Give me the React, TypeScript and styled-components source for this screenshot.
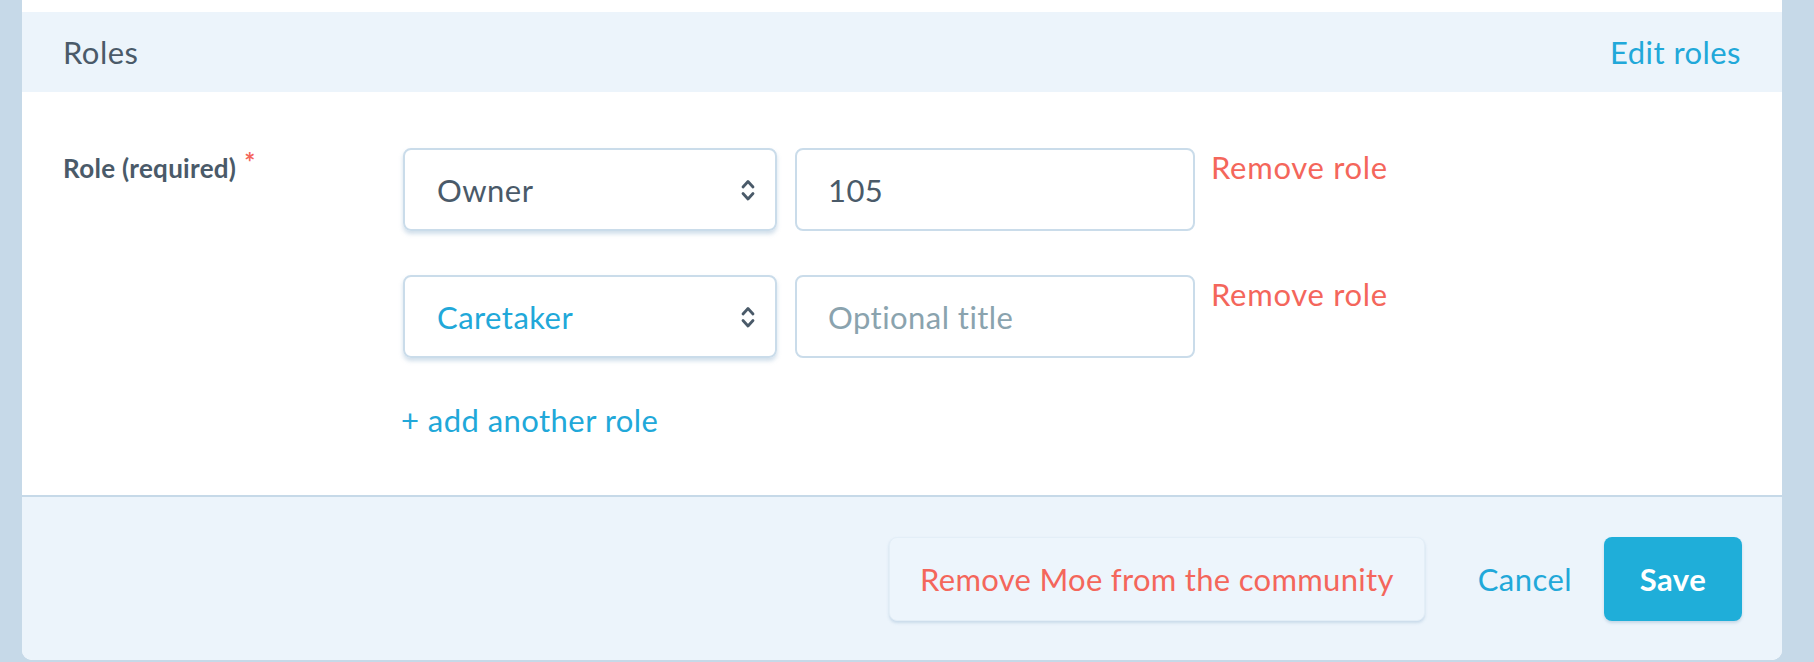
import React from 'react';
import styled, { createGlobalStyle } from 'styled-components';

const GlobalStyle = createGlobalStyle`
  body {
    margin: 0;
    background: #c6d9e8;
    font-family: 'Lato', 'Liberation Sans', sans-serif;
    letter-spacing: 0.45px;
  }
`;

const roles = [
  { role: 'Owner', title: '105' },
  { role: 'Caretaker', title: '' },
];

const Chevrons = () => (
  <svg width="14" height="22" viewBox="0 0 14 22" fill="none">
    <path d="M2 8 L7 2.5 L12 8" stroke="#4a5a69" strokeWidth="2.8" strokeLinecap="round" strokeLinejoin="round" />
    <path d="M2 14.5 L7 20 L12 14.5" stroke="#4a5a69" strokeWidth="2.8" strokeLinecap="round" strokeLinejoin="round" />
  </svg>
);

export default function App() {
  return (
    <Page>
      <GlobalStyle />
      <Card>
        <SectionHeader>
          <Title>Roles</Title>
          <LinkText>Edit roles</LinkText>
        </SectionHeader>
        <Body>
          <Label>
            Role (required)<Star>*</Star>
          </Label>
          <Fields>
            {roles.map((r) => (
              <RoleRow key={r.role}>
                <Select highlight={r.role !== 'Owner'}>
                  <span>{r.role}</span>
                  <Chevrons />
                </Select>
                <TitleInput defaultValue={r.title} placeholder="Optional title" readOnly />
                <RemoveLink>Remove role</RemoveLink>
              </RoleRow>
            ))}
            <AddLink>+ add another role</AddLink>
          </Fields>
        </Body>
        <Footer>
          <GhostButton>Remove Moe from the community</GhostButton>
          <CancelLink>Cancel</CancelLink>
          <SaveButton>Save</SaveButton>
        </Footer>
      </Card>
    </Page>
  );
}

const Page = styled.div`
  height: 662px;
  padding: 0 32px 2px 22px;
  box-sizing: border-box;
`;

const Card = styled.div`
  height: 100%;
  background: #ffffff;
  border-radius: 0 0 10px 10px;
  padding-top: 12px;
  box-sizing: border-box;
  display: flex;
  flex-direction: column;
  overflow: hidden;
`;

const SectionHeader = styled.div`
  height: 80px;
  background: #ecf4fb;
  display: flex;
  align-items: center;
  justify-content: space-between;
  padding: 0 41px;
`;

const Title = styled.div`
  font-size: 31px;
  color: #4a5a69;
`;

const LinkText = styled.div`
  font-size: 31px;
  color: #21a8d9;
  cursor: pointer;
`;

const Body = styled.div`
  display: grid;
  grid-template-columns: 340px 1fr;
  padding: 56px 41px 56px;
`;

const Label = styled.div`
  font-size: 26px;
  font-weight: 700;
  letter-spacing: 0.3px;
  color: #4a5a69;
  margin-top: 4px;
`;

const Star = styled.span`
  color: #f4665b;
  font-size: 26px;
  vertical-align: top;
  margin-left: 8px;
  position: relative;
  top: -6px;
`;

const Fields = styled.div`
  display: flex;
  flex-direction: column;
  gap: 44px;
`;

const RoleRow = styled.div`
  display: flex;
  align-items: flex-start;
`;

const Select = styled.div<{ highlight?: boolean }>`
  width: 374px;
  height: 83px;
  box-sizing: border-box;
  border: 2px solid #cadcea;
  border-radius: 8px;
  box-shadow: 0 3px 4px rgba(120, 160, 195, 0.35);
  display: flex;
  align-items: center;
  justify-content: space-between;
  padding: 0 20px 0 32px;
  font-size: 31px;
  color: ${(p) => (p.highlight ? '#21a8d9' : '#4a5a69')};
`;

const TitleInput = styled.input`
  width: 400px;
  height: 83px;
  box-sizing: border-box;
  margin-left: 18px;
  border: 2px solid #cadcea;
  border-radius: 8px;
  padding: 0 31px;
  font-family: 'Lato', 'Liberation Sans', sans-serif;
  font-size: 31px;
  letter-spacing: 0.45px;
  color: #4a5a69;
  outline: none;
  &::placeholder {
    color: #8aa3ae;
  }
`;

const RemoveLink = styled.div`
  margin-left: 16px;
  font-size: 31px;
  letter-spacing: 0.7px;
  color: #f4665b;
  cursor: pointer;
`;

const AddLink = styled.div`
  margin-left: -2px;
  margin-top: -1px;
  font-size: 31px;
  color: #21a8d9;
  cursor: pointer;
`;

const Footer = styled.div`
  flex: 1;
  background: #ecf4fb;
  border-top: 2px solid #c6d9e8;
  display: flex;
  align-items: center;
  justify-content: flex-end;
  padding: 0 40px;
`;

const BaseButton = styled.button`
  height: 84px;
  border-radius: 8px;
  font-family: 'Lato', 'Liberation Sans', sans-serif;
  font-size: 31px;
  letter-spacing: 0.45px;
  cursor: pointer;
  box-sizing: border-box;
`;

const GhostButton = styled(BaseButton)`
  padding: 0 30px;
  letter-spacing: 0.3px;
  background: #edf5fc;
  border: 1px solid #e3eef7;
  box-shadow: 0 2px 3px rgba(120, 160, 195, 0.3);
  color: #f4665b;
  margin-right: 53px;
`;

const CancelLink = styled.div`
  font-size: 31px;
  color: #21a8d9;
  margin-right: 32px;
  cursor: pointer;
`;

const SaveButton = styled(BaseButton)`
  width: 138px;
  background: #1faed9;
  border: none;
  color: #ffffff;
  font-weight: 700;
  box-shadow: 0 2px 3px rgba(80, 130, 170, 0.25);
`;
